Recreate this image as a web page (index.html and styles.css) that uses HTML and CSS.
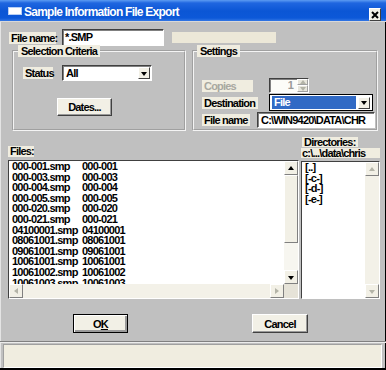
FILE: index.html
```html
<!DOCTYPE html>
<html lang="en">
<head>
    <meta charset="UTF-8">
    <title>Sample Information File Export</title>
    <link rel="stylesheet" href="styles.css">
</head>
<body>
    <div class="window">
        <div class="titlebar">
            <div class="title-icon"></div>
            <span class="title-text">Sample Information File Export</span>
            <div class="close-btn">
                <svg width="8" height="8" viewBox="0 0 8 8"><path d="M1 1L7 7M7 1L1 7" stroke="#000" stroke-width="2"/></svg>
            </div>
        </div>

        <div class="file-row">
            <span class="lbl lbl-filename">File name:</span>
            <div class="field field-file">*.SMP</div>
            <div class="disabled-box"></div>
        </div>

        <div class="groups">
            <fieldset class="group group-criteria">
                <legend>Selection Criteria</legend>
                <div class="status-row">
                    <span class="lbl lbl-status">Status</span>
                    <div class="field combo combo-status">
                        <span class="combo-text">All</span>
                        <span class="combo-btn"><i class="arr arr-down"></i></span>
                    </div>
                </div>
                <div class="btn btn-dates">Dates...</div>
            </fieldset>

            <fieldset class="group group-settings">
                <legend>Settings</legend>
                <div class="set-row copies-row">
                    <span class="lbl lbl-copies">Copies</span>
                    <div class="field spinner">
                        <span class="spin-val">1</span>
                        <span class="spin-btns">
                            <span class="spin-btn"><i class="arr arr-up off"></i></span>
                            <span class="spin-btn"><i class="arr arr-down off"></i></span>
                        </span>
                    </div>
                </div>
                <div class="set-row dest-row">
                    <span class="lbl lbl-dest">Destination</span>
                    <div class="combo combo-dest">
                        <span class="combo-sel">File</span>
                        <span class="combo-btn"><i class="arr arr-down"></i></span>
                    </div>
                </div>
                <div class="set-row fname-row">
                    <span class="lbl lbl-fname">File name</span>
                    <div class="field field-path">C:\WIN9420\DATA\CHR</div>
                </div>
            </fieldset>
        </div>

        <div class="lists">
            <div class="files-col">
                <span class="lbl lbl-files">Files:</span>
                <div class="listbox files-box">
                    <div class="list-items files-items">
                        <div class="item"><span class="fname">000-001.smp</span>000-001</div>
                        <div class="item"><span class="fname">000-003.smp</span>000-003</div>
                        <div class="item"><span class="fname">000-004.smp</span>000-004</div>
                        <div class="item"><span class="fname">000-005.smp</span>000-005</div>
                        <div class="item"><span class="fname">000-020.smp</span>000-020</div>
                        <div class="item"><span class="fname">000-021.smp</span>000-021</div>
                        <div class="item"><span class="fname">04100001.smp</span>04100001</div>
                        <div class="item"><span class="fname">08061001.smp</span>08061001</div>
                        <div class="item"><span class="fname">09061001.smp</span>09061001</div>
                        <div class="item"><span class="fname">10061001.smp</span>10061001</div>
                        <div class="item"><span class="fname">10061002.smp</span>10061002</div>
                        <div class="item"><span class="fname">10061003.smp</span>10061003</div>
                    </div>
                    <div class="vscroll">
                        <span class="sb-btn"><i class="arr arr-up"></i></span>
                        <span class="sb-thumb"></span>
                        <span class="sb-track"></span>
                        <span class="sb-btn"><i class="arr arr-down"></i></span>
                    </div>
                    <div class="hscroll">
                        <span class="sb-btn"><i class="arr arr-left off"></i></span>
                        <span class="sb-track"></span>
                        <span class="sb-btn"><i class="arr arr-right off"></i></span>
                    </div>
                    <div class="sb-corner"></div>
                </div>
            </div>

            <div class="dirs-col">
                <span class="lbl lbl-dirs">Directories:</span>
                <span class="lbl lbl-path">c:\...\data\chris</span>
                <div class="listbox dirs-box">
                    <div class="list-items dirs-items">
                        <div class="item">[..]</div>
                        <div class="item">[-c-]</div>
                        <div class="item">[-d-]</div>
                        <div class="item">[-e-]</div>
                    </div>
                    <div class="vscroll">
                        <span class="sb-btn"><i class="arr arr-up off"></i></span>
                        <span class="sb-track"></span>
                        <span class="sb-btn"><i class="arr arr-down off"></i></span>
                    </div>
                </div>
            </div>
        </div>

        <div class="buttons">
            <div class="btn btn-default btn-ok">O<u>K</u></div>
            <div class="btn btn-cancel">Cancel</div>
        </div>

        <div class="statusbar">
            <div class="status-inner"></div>
        </div>
    </div>
</body>
</html>
```

FILE: styles.css
```css
* {
    box-sizing: border-box;
}

body {
    margin: 0;
    font-family: "Liberation Sans", Arial, sans-serif;
    font-size: 11px;
    font-weight: bold;
    letter-spacing: -0.8px;
    color: #000;
}

.window {
    width: 386px;
    height: 370px;
    background: #c0c0c0;
    box-shadow: inset -1px -2px #000, inset 1px 0 #e4e4e4;
    overflow: hidden;
}

/* Title bar */
.titlebar {
    height: 22px;
    display: flex;
    align-items: center;
    padding: 2px 5px 0 8px;
    color: #fff;
    background: linear-gradient(#5d9cf2 0, #1f66e0 3px, #0b56d5 11px, #0c58d8 18px, #3276e4 21px, #d8d8d8 21px);
}

.title-icon {
    width: 14px;
    height: 8px;
    margin: -2px 2px 0 0;
    background: #fff;
    border: 1px solid #b8cff4;
}

.title-text {
    flex: 1;
    font-size: 12px;
    letter-spacing: -0.75px;
}

.close-btn {
    align-self: flex-end;
    width: 12px;
    height: 13px;
    margin-bottom: 1px;
    display: flex;
    align-items: center;
    justify-content: center;
    background: #f2f0e6;
    border: 1px solid;
    border-color: #fff #404040 #404040 #fff;
}

/* Shared bits */
.lbl {
    display: block;
    height: 12px;
    line-height: 12px;
    padding: 0 2px;
    background: #f0ede0;
    white-space: nowrap;
}

.field {
    background: #fff;
    border: 1px solid;
    border-color: #404040 #fff #fff #404040;
    box-shadow: inset 1px 1px #808080;
    white-space: nowrap;
    overflow: hidden;
}

.btn {
    display: flex;
    align-items: center;
    justify-content: center;
    background: #f2f0e6;
    border: 1px solid;
    border-color: #fff #404040 #404040 #fff;
    box-shadow: inset -1px -1px #9a9a9a;
}

.btn-default {
    border: 1px solid #000;
    box-shadow: inset 1px 1px #fff, inset -2px -2px #9a9a9a;
}

.arr {
    display: block;
    width: 0;
    height: 0;
    border: 3px solid transparent;
}
.arr-down {
    border-top: 4px solid #000;
    border-bottom: 0;
    margin-top: 1px;
}
.arr-up {
    border-bottom: 4px solid #000;
    border-top: 0;
    margin-top: -1px;
}
.arr-left {
    border-right: 4px solid #000;
    border-left: 0;
}
.arr-right {
    border-left: 4px solid #000;
    border-right: 0;
}
.arr.off {
    border-top-color: transparent;
    border-bottom-color: transparent;
    border-left-color: transparent;
    border-right-color: transparent;
}
.arr-down.off { border-top-color: #b4b4a8; }
.arr-up.off { border-bottom-color: #b4b4a8; }
.arr-left.off { border-right-color: #b4b4a8; }
.arr-right.off { border-left-color: #b4b4a8; }

/* File name row */
.file-row {
    display: flex;
    align-items: center;
    height: 17px;
    margin: 7px 0 0 9px;
}

.lbl-filename {
    width: 47px;
    margin-right: 6px;
}

.field-file {
    width: 102px;
    height: 17px;
    padding: 1px 0 0 2px;
    line-height: 13px;
}

.disabled-box {
    width: 104px;
    height: 11px;
    margin-left: 8px;
    background: #ece8d8;
}

/* Group boxes */
.groups {
    display: flex;
    gap: 6px;
    margin: -1px 0 0 12px;
}

.group {
    height: 86px;
    margin: 0;
    padding: 0;
    border: 2px groove #f4f4f4;
}

.group legend {
    height: 12px;
    line-height: 12px;
    margin-left: 4px;
    padding: 0 3px;
    background: #f0ede0;
}

.group-criteria {
    width: 174px;
}

.group-settings {
    width: 186px;
}

.group-settings legend {
    margin-left: 3px;
}

.status-row {
    display: flex;
    align-items: center;
    margin: 8px 0 0 9px;
}

.lbl-status {
    width: 30px;
    margin-right: 9px;
}

.combo {
    display: flex;
    align-items: center;
    height: 16px;
}

.combo-status {
    width: 90px;
    padding: 0 1px 0 3px;
}

.combo-text {
    flex: 1;
}

.combo-btn {
    display: flex;
    align-items: center;
    justify-content: center;
    width: 12px;
    height: 12px;
    background: #f2f0e6;
    border: 1px solid;
    border-color: #fff #404040 #404040 #fff;
}

.btn-dates {
    width: 55px;
    height: 18px;
    margin: 17px 0 0 43px;
}

.set-row {
    display: flex;
    align-items: center;
    margin: 1px 0 0 8px;
}

.copies-row {
    margin-top: 21px;
}

.lbl-copies {
    width: 51px;
    margin-right: 16px;
    color: #a8a8a0;
}

.spinner {
    display: flex;
    width: 40px;
    height: 15px;
    background: #fcfcf8;
}

.spin-val {
    flex: 1;
    text-align: right;
    padding-right: 4px;
    line-height: 13px;
    color: #9a9a9a;
}

.spin-btns {
    display: flex;
    flex-direction: column;
    width: 11px;
}

.spin-btn {
    flex: 1;
    display: flex;
    align-items: center;
    justify-content: center;
    background: #e8e6dc;
    border: 1px solid;
    border-color: #fff #a0a0a0 #a0a0a0 #fff;
}

.lbl-dest {
    width: 56px;
    margin-right: 11px;
}

.combo-dest {
    width: 104px;
    height: 17px;
    padding: 1px 2px 1px 2px;
    background: #fff;
    border: 1px solid #000;
}

.combo-sel {
    flex: 1;
    height: 13px;
    line-height: 13px;
    margin-right: 2px;
    padding-left: 2px;
    color: #fff;
    background: #316ac5;
}

.lbl-fname {
    width: 48px;
    margin-right: 7px;
}

.field-path {
    width: 118px;
    height: 16px;
    padding: 1px 0 0 3px;
    line-height: 13px;
}

/* Lists */
.lists {
    display: flex;
    margin: 6px 0 0 8px;
}

.files-col {
    width: 291px;
    display: flex;
    flex-direction: column;
    align-items: flex-start;
}

.lbl-files {
    height: 11px;
    line-height: 11px;
    width: 26px;
    margin-top: 9px;
}

.listbox {
    display: grid;
    background: #fff;
    border: 1px solid;
    border-color: #404040 #fff #fff #404040;
}

.files-box {
    width: 291px;
    height: 139px;
    margin-top: 3px;
    grid-template-columns: 1fr 14px;
    grid-template-rows: 1fr 14px;
}

.list-items {
    overflow: hidden;
    font-size: 11px;
    line-height: 10.6px;
    letter-spacing: -0.75px;
    white-space: nowrap;
}

.files-items {
    padding-left: 3px;
}

.fname {
    display: inline-block;
    width: 70px;
}

.vscroll {
    display: flex;
    flex-direction: column;
}

.hscroll {
    display: flex;
}

.sb-btn {
    flex: none;
    width: 14px;
    height: 14px;
    display: flex;
    align-items: center;
    justify-content: center;
    background: #f2f0e6;
    border: 1px solid;
    border-color: #fff #808080 #808080 #fff;
}

.sb-thumb {
    height: 68px;
    background: #f2f0e6;
    border: 1px solid;
    border-color: #fff #808080 #808080 #fff;
}

.sb-track {
    flex: 1;
    background: #f7f6f0;
}

.hscroll .sb-track {
    background: #f3f1e8;
}

.sb-corner {
    background: #e6e3d8;
}

.dirs-col {
    width: 79px;
    margin-left: 2px;
    display: flex;
    flex-direction: column;
    align-items: flex-start;
}

.lbl-dirs {
    height: 10px;
    line-height: 10px;
    margin-left: 1px;
}

.lbl-path {
    width: 79px;
    height: 10px;
    line-height: 10px;
    margin-top: 1px;
    padding: 0 1px;
    overflow: hidden;
}

.dirs-box {
    width: 79px;
    height: 138px;
    margin-top: 3px;
    grid-template-columns: 1fr 14px;
}

.dirs-items {
    padding-left: 3px;
}

.dirs-box .sb-track {
    background: #f3f1e8;
}

/* Buttons */
.buttons {
    display: flex;
    margin: 15px 0 0 73px;
}

.btn-ok {
    width: 55px;
    height: 19px;
}

.btn-cancel {
    width: 56px;
    height: 19px;
    margin-left: 124px;
}

/* Status bar */
.statusbar {
    margin-top: 8px;
    padding: 1px 4px 0 3px;
    border-top: 1px solid #808080;
    box-shadow: inset 0 1px #ececec;
}

.status-inner {
    height: 24px;
    margin-top: 1px;
    background: #f0ede0;
    border: 1px solid;
    border-color: #a0a0a0 #fff #fff #a0a0a0;
}
```
